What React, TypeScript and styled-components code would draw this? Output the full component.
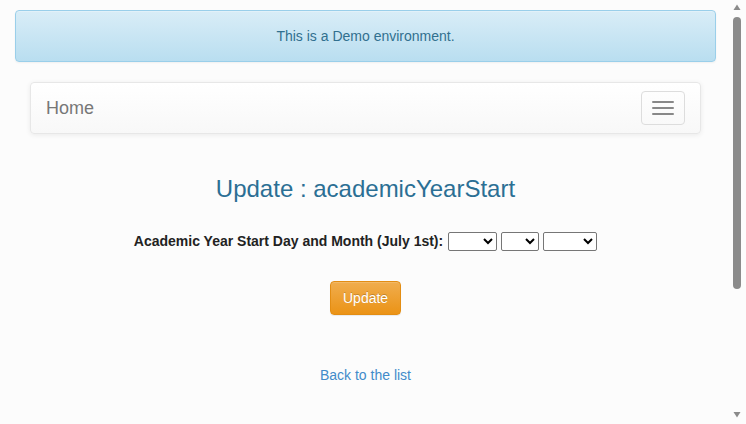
import React from "react";
import styled, { createGlobalStyle } from "styled-components";

const Global = createGlobalStyle`
  html, body { margin: 0; padding: 0; background: #fcfcfc; overflow: hidden; }
  body { font-family: "Liberation Sans", Arial, sans-serif; font-size: 14px; line-height: 20px; color: #333; }
`;

const Frame = styled.div`
  display: flex;
  height: 100vh;
  overflow: hidden;
  background: #fcfcfc;
`;

const Page = styled.div`
  flex: 1;
  min-width: 0;
  padding: 10px 15px 0;
`;

const Rail = styled.div`
  width: 15px;
  flex: none;
  display: flex;
  flex-direction: column;
  align-items: flex-start;
  padding: 4px 0 6px 2px;
  box-sizing: border-box;
`;

const Arrow = styled.svg`
  display: block;
  width: 8px;
  height: 7px;
  flex: none;
`;

const Thumb = styled.div`
  margin-top: 6px;
  width: 8px;
  height: 272px;
  border-radius: 4px;
  background: #8b8b8b;
`;

const RailSpace = styled.div`
  flex: 1;
`;

const Alert = styled.div`
  background: linear-gradient(to bottom, #d9edf7 0, #b9def0 100%);
  border: 1px solid #9acfea;
  border-radius: 4px;
  color: #31708f;
  padding: 15px;
  text-align: center;
  box-shadow: inset 0 1px 0 rgba(255,255,255,.25), 0 1px 2px rgba(0,0,0,.05);
`;

const Navbar = styled.nav`
  margin: 20px 15px 0;
  height: 50px;
  display: flex;
  align-items: center;
  justify-content: space-between;
  background: linear-gradient(to bottom, #fff 0, #f8f8f8 100%);
  border: 1px solid #e7e7e7;
  border-radius: 4px;
  box-shadow: inset 0 1px 0 rgba(255,255,255,.15), 0 1px 5px rgba(0,0,0,.075);
`;

const Brand = styled.a`
  font-size: 18px;
  color: #777;
  padding: 0 15px;
  text-decoration: none;
`;

const Toggle = styled.button`
  margin-right: 15px;
  width: 44px;
  height: 34px;
  border: 1px solid #ddd;
  border-radius: 4px;
  background: transparent;
  display: flex;
  flex-direction: column;
  align-items: center;
  justify-content: center;
  gap: 4px;
  padding: 0;
`;

const Bar = styled.span`
  display: block;
  width: 22px;
  height: 2px;
  border-radius: 1px;
  background: #888;
`;

const Main = styled.main`
  display: flex;
  flex-direction: column;
  align-items: center;
`;

const Title = styled.h2`
  margin: 42px 0 0;
  font-size: 24px;
  font-weight: 400;
  line-height: 26px;
  color: #2b6f94;
`;

const FormRow = styled.div`
  margin-top: 29px;
  display: flex;
  align-items: center;
  gap: 4px;
`;

const Label = styled.label`
  font-weight: 700;
  font-size: 14px;
  color: #222;
  margin-right: 1px;
`;

const Select = styled.select<{ $w: number }>`
  width: ${(p) => p.$w}px;
  height: 19px;
  border: 1px solid #767676;
  border-radius: 2px;
  background: #fff;
  font-size: 13px;
`;

const Button = styled.button`
  margin-top: 30px;
  width: 71px;
  height: 34px;
  padding: 6px 12px;
  font-family: inherit;
  font-size: 14px;
  color: #fff;
  background: linear-gradient(to bottom, #f0ad4e 0, #eb9316 100%);
  border: 1px solid #e38d13;
  border-radius: 4px;
  text-shadow: 0 -1px 0 rgba(0,0,0,.2);
  box-shadow: inset 0 1px 0 rgba(255,255,255,.15), 0 1px 1px rgba(0,0,0,.075);
`;

const BackLink = styled.a`
  margin-top: 50px;
  color: #428bca;
  text-decoration: none;
`;

export default function App() {
  return (
    <>
      <Global />
      <Frame>
        <Page>
          <Alert>This is a Demo environment.</Alert>
          <Navbar>
            <Brand href="#">Home</Brand>
            <Toggle aria-label="Toggle navigation">
              <Bar />
              <Bar />
              <Bar />
            </Toggle>
          </Navbar>
          <Main>
            <Title>Update : academicYearStart</Title>
            <FormRow>
              <Label>Academic Year Start Day and Month (July 1st):</Label>
              <Select $w={49} />
              <Select $w={38} />
              <Select $w={54} />
            </FormRow>
            <Button>Update</Button>
            <BackLink href="#">Back to the list</BackLink>
          </Main>
        </Page>
        <Rail aria-hidden="true">
          <Arrow viewBox="0 0 8 7">
            <path d="M4 0.5 L7.5 6 L0.5 6 Z" fill="#8b8b8b" />
          </Arrow>
          <Thumb />
          <RailSpace />
          <Arrow viewBox="0 0 8 7">
            <path d="M0.5 1 L7.5 1 L4 6.5 Z" fill="#8b8b8b" />
          </Arrow>
        </Rail>
      </Frame>
    </>
  );
}
